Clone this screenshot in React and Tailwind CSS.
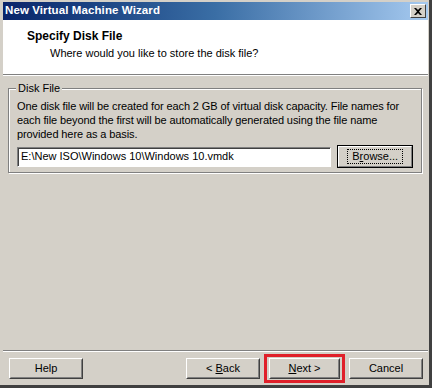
export default function App() {
  return (
    <div className="w-[432px] h-[388px] bg-[#d4d0c8] font-['Liberation_Sans',Arial,sans-serif] text-[11px] text-black overflow-hidden">
      <div className="h-full flex flex-col pl-[3px] pt-[2px] pr-[1px] pb-[1px] border-r-[3px] border-r-[#404040] border-b-[3px] border-b-[#404040]">
        {/* Title bar */}
        <div className="h-[18px] flex items-center justify-between pl-[2px] pr-[2px] bg-gradient-to-r from-[#0a246a] via-[#3a6ea5] to-[#a6caf0]">
          <span className="text-white font-bold text-[11.5px] tracking-[0.1px]">New Virtual Machine Wizard</span>
          <div className="w-[16px] h-[14px] bg-[#d4d0c8] border border-t-white border-l-white border-r-[#404040] border-b-[#404040] flex items-center justify-center">
            <svg width="8" height="7" viewBox="0 0 8 7">
              <path d="M0 0h2l2 2 2-2h2L5 3.5 8 7H6L4 5 2 7H0l3-3.5z" fill="#000" />
            </svg>
          </div>
        </div>

        {/* Header */}
        <div className="h-[54px] bg-white pl-[24px] pt-[9px]">
          <div className="font-bold text-[12px] leading-[14px]">Specify Disk File</div>
          <div className="pl-[23px] mt-[3px] leading-[14px]">Where would you like to store the disk file?</div>
        </div>
        <div className="h-px bg-[#808080]" />
        <div className="h-px bg-white" />

        {/* Content */}
        <div className="flex-1 px-[5px] pt-[12px]">
          <div className="relative border border-[#808080] shadow-[inset_1px_1px_0_#ffffff,1px_1px_0_#ffffff] pl-[8px] pr-[8px] pt-[10px] pb-[4px] w-[414px]">
            <span className="absolute left-[7px] top-[-8px] bg-[#d4d0c8] px-[2px] leading-[14px]">Disk File</span>
            <p className="leading-[14px] w-[392px] tracking-[-0.1px]">
              One disk file will be created for each 2 GB of virtual disk capacity. File names for each file beyond the first will be automatically generated using the file name provided here as a basis.
            </p>
            <div className="flex items-center mt-[4px] gap-[6px]">
              <div className="w-[316px] h-[20px] bg-white border border-t-[#808080] border-l-[#808080] border-r-white border-b-white shadow-[inset_1px_1px_0_#404040] flex items-center pl-[3px]">
                E:\New ISO\Windows 10\Windows 10.vmdk
              </div>
              <div className="w-[76px] h-[23px] border border-black p-0 bg-[#d4d0c8]">
                <div className="h-full border border-t-white border-l-white border-r-[#808080] border-b-[#808080] flex items-center justify-center">
                  <div className="border border-dotted border-black px-[4px] leading-[13px]">
                    B<span className="underline">r</span>owse...
                  </div>
                </div>
              </div>
            </div>
          </div>
        </div>

        {/* Bottom */}
        <div className="h-px bg-[#808080]" />
        <div className="h-px bg-white" />
        <div className="h-[32px] flex items-start pt-[6px] pl-[6px] pr-[5px]">
          <WinButton>Help</WinButton>
          <div className="flex-1" />
          <WinButton><span>&lt; </span><span className="underline">B</span>ack</WinButton>
          <div className="ml-[4px] border-[3px] border-[#e0202a] px-[2px] py-px -mt-[4px]">
            <WinButton w="w-[71px]"><span className="underline">N</span>ext &gt;</WinButton>
          </div>
          <div className="ml-[4px]">
            <WinButton>Cancel</WinButton>
          </div>
        </div>
      </div>
    </div>
  )
}

function WinButton({ children, w = 'w-[74px]' }) {
  return (
    <div className={`${w} h-[21px] bg-[#d4d0c8] border border-t-white border-l-white border-r-[#404040] border-b-[#404040]`}>
      <div className="h-full border border-transparent border-r-[#808080] border-b-[#808080] flex items-center justify-center">
        <span>{children}</span>
      </div>
    </div>
  )
}
